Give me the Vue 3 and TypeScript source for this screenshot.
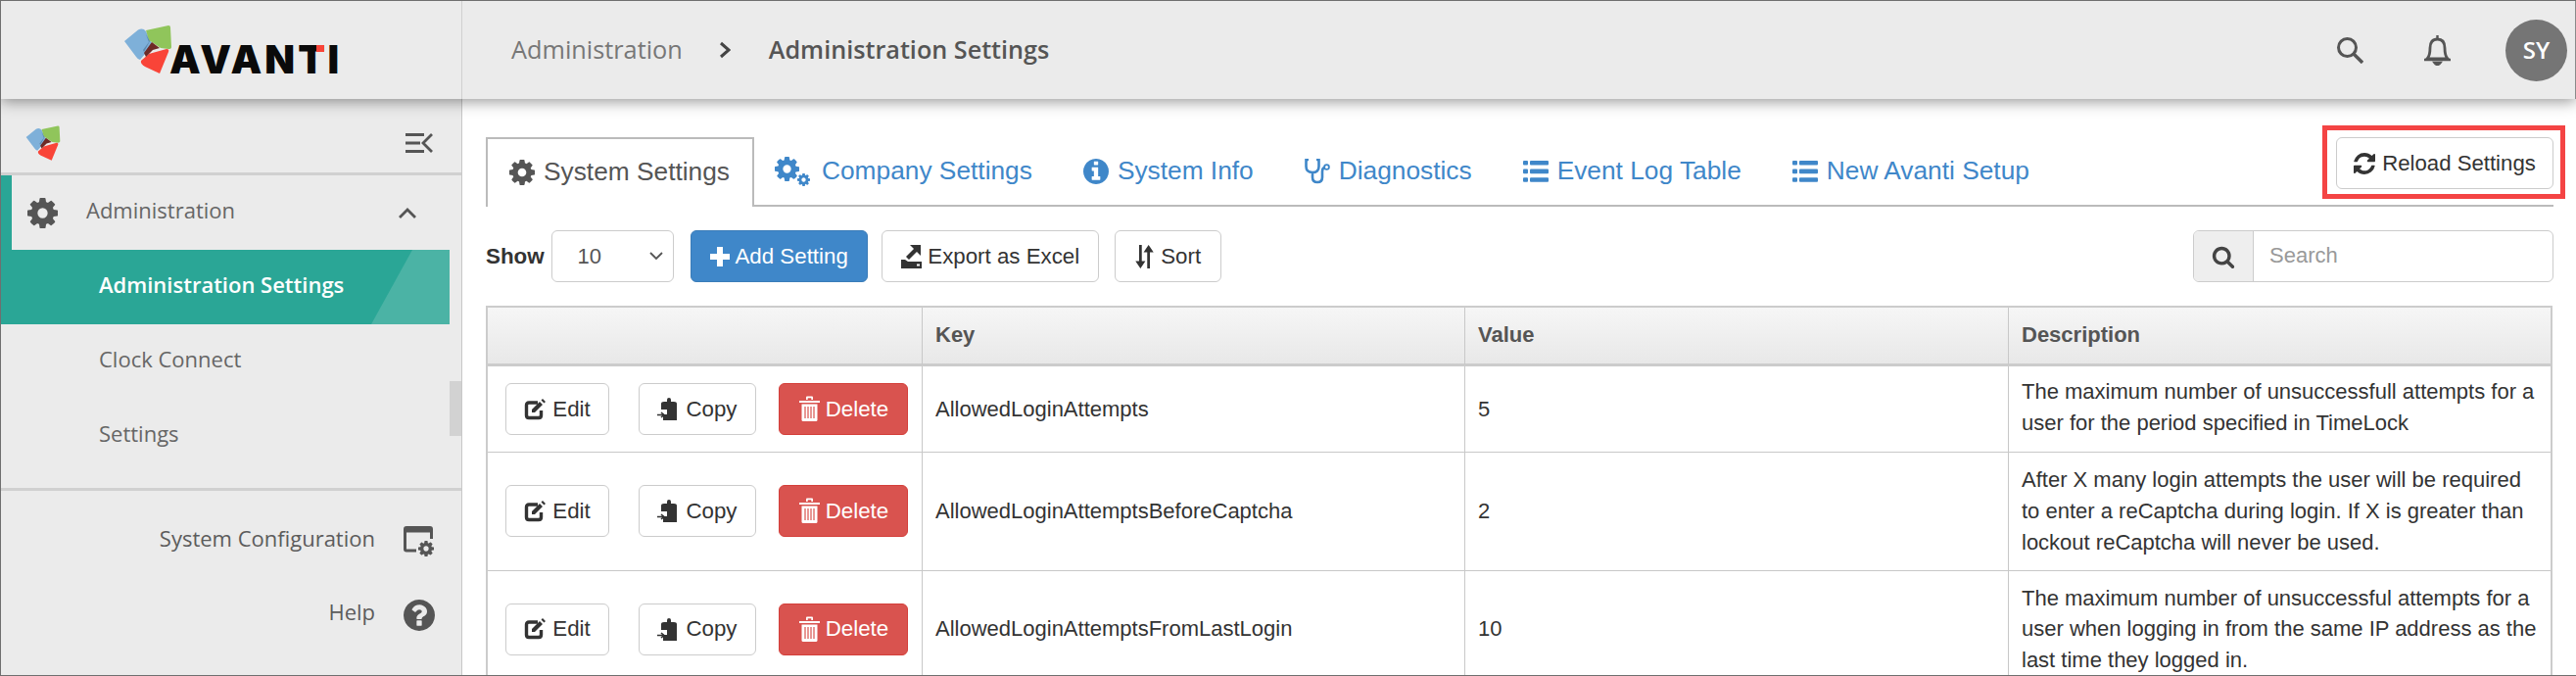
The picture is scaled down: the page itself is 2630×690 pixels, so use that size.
<script setup lang="ts">
const gear = 'M1152 896q0-106-75-181t-181-75-181 75-75 181 75 181 181 75 181-75 75-181zm512-109v222q0 12-8 23t-20 13l-185 28q-19 54-39 91 35 50 107 138 10 12 10 25t-9 23q-27 37-99 108t-94 71q-12 0-26-9l-138-108q-44 23-91 38-16 136-29 186-7 28-36 28h-222q-14 0-24.5-8.5t-11.5-21.5l-28-184q-49-16-90-37l-141 107q-10 9-25 9-14 0-25-11-126-114-165-168-7-10-7-23 0-12 8-23 15-21 51-66.5t54-70.5q-27-50-41-99l-183-27q-13-2-21-12.5t-8-23.5v-222q0-12 8-23t19-13l186-28q14-46 39-92-40-57-107-138-10-12-10-24 0-10 9-23 26-36 98.5-107.5t94.5-71.5q13 0 26 10l138 107q44-23 91-38 16-136 29-186 7-28 36-28h222q14 0 24.5 8.5t11.5 21.5l28 184q49 16 90 37l142-107q9-9 24-9 13 0 25 10 129 119 165 170 7 8 7 22 0 12-8 23-15 21-51 66.5t-54 70.5q26 50 41 98l183 28q13 2 21 12.5t8 23.5z'
const info = 'M1152 1376v-160q0-14-9-23t-23-9h-96v-512q0-14-9-23t-23-9h-320q-14 0-23 9t-9 23v160q0 14 9 23t23 9h96v320h-96q-14 0-23 9t-9 23v160q0 14 9 23t23 9h448q14 0 23-9t9-23zm-128-896v-160q0-14-9-23t-23-9h-192q-14 0-23 9t-9 23v160q0 14 9 23t23 9h192q14 0 23-9t9-23zm640 416q0 209-103 385.5t-279.5 279.5-385.5 103-385.5-103-279.5-279.5-103-385.5 103-385.5 279.5-279.5 385.5-103 385.5 103 279.5 279.5 103 385.5z'
const help = 'M1024 1376v-192q0-14-9-23t-23-9h-192q-14 0-23 9t-9 23v192q0 14 9 23t23 9h192q14 0 23-9t9-23zm256-672q0-88-55.5-163t-138.5-116-170-41q-243 0-371 213-15 24 8 42l132 100q7 6 19 6 16 0 25-12 53-68 86-92 34-24 86-24 48 0 85.5 26t37.5 59q0 38-20 61t-68 45q-63 28-115.5 86.5t-52.5 125.5v36q0 14 9 23t23 9h192q14 0 23-9t9-23q0-19 21.5-49.5t54.5-49.5q32-18 49-28.5t46-35 44.5-48 28-60.5 12.5-81zm384 192q0 209-103 385.5t-279.5 279.5-385.5 103-385.5-103-279.5-279.5-103-385.5 103-385.5 279.5-279.5 385.5-103 385.5 103 279.5 279.5 103 385.5z'
const refresh = 'M1639 1056q0 5-1 7-64 268-268 434.5t-478 166.5q-146 0-282.5-55t-243.5-157l-129 129q-19 19-45 19t-45-19-19-45v-448q0-26 19-45t45-19h448q26 0 45 19t19 45-19 45l-137 137q71 66 161 102t187 36q134 0 250-65t186-179q11-17 53-117 8-23 30-23h192q13 0 22.5 9.5t9.5 22.5zm25-800v448q0 26-19 45t-45 19h-448q-26 0-45-19t-19-45 19-45l138-138q-148-137-349-137-134 0-250 65t-186 179q-11 17-53 117-8 23-30 23h-199q-13 0-22.5-9.5t-9.5-22.5v-7q65-268 270-434.5t480-166.5q146 0 284 55.5t245 156.5l130-129q19-19 45-19t45 19 19 45z'
const search = 'M1216 832q0-185-131.5-316.5t-316.5-131.5-316.5 131.5-131.5 316.5 131.5 316.5 316.5 131.5 316.5-131.5 131.5-316.5zm512 832q0 52-38 90t-90 38q-54 0-90-38l-343-342q-179 124-399 124-143 0-273.5-55.5t-225-150-150-225-55.5-273.5 55.5-273.5 150-225 225-150 273.5-55.5 273.5 55.5 225 150 150 225 55.5 273.5q0 220-124 399l343 343q37 37 37 90z'

const rows = [
  { key: 'AllowedLoginAttempts', value: '5', desc: 'The maximum number of unsuccessfull attempts for a user for the period specified in TimeLock' },
  { key: 'AllowedLoginAttemptsBeforeCaptcha', value: '2', desc: 'After X many login attempts the user will be required to enter a reCaptcha during login. If X is greater than lockout reCaptcha will never be used.' },
  { key: 'AllowedLoginAttemptsFromLastLogin', value: '10', desc: 'The maximum number of unsuccessful attempts for a user when logging in from the same IP address as the last time they logged in.' },
]
</script>

<template>
  <div class="page">
    <svg class="defs" aria-hidden="true">
      <symbol id="mark" viewBox="125 24 52 54">
        <path d="M127 42 141 30.500Q146 28 149 32L156 46 143 61Q141 61 139 58Z" fill="#7eb0d9" />
        <path d="M149 31 172 26Q174 26 174 28L175 48Q175 50 172 50L164 49 152 41Z" fill="#90c55b" />
        <path d="M144 62 152 55 170 50Q173 50 172 53L163 75 148 68Q143 65 144 62Z" fill="#f94438" />
        <path d="M149 35 153 42 147 53 146 51 152 43Z" fill="#5d88ad" />
        <path d="M155 43 163 49 156 51 149 58 147 54Z" fill="#6e2a26" />
      </symbol>
      <symbol id="list" viewBox="0 0 26 22">
        <rect x="0" y="0" width="5" height="4.6" rx="1" /><rect x="7" y="0" width="19" height="4.6" rx="1" />
        <rect x="0" y="8.6" width="5" height="4.6" rx="1" /><rect x="7" y="8.6" width="19" height="4.6" rx="1" />
        <rect x="0" y="17.2" width="5" height="4.6" rx="1" /><rect x="7" y="17.2" width="19" height="4.6" rx="1" />
      </symbol>
      <symbol id="edit" viewBox="0 0 22 22">
        <path d="M14 4H5Q2.500 4 2.500 6.500V17Q2.500 19.500 5 19.500H15Q17.500 19.500 17.500 17V12" fill="none" stroke="currentColor" stroke-width="3.400" />
        <path d="M8 11 16 3 19 6 11 14H8Z M17.500 1.500 19 0 22 3 20.500 4.500Z" fill="currentColor" />
      </symbol>
      <symbol id="copy" viewBox="0 0 21 23">
        <path d="M7 4H10V2Q10 0 12 0T14 2V4H17Q20 4 20 6V23H6V17H10V12H4V6Q4 4 7 4Z" fill="currentColor" />
        <path d="M0 17.500H6M4 15 7 17.500 4 20" fill="none" stroke="currentColor" stroke-width="1.600" />
      </symbol>
      <symbol id="trash" viewBox="0 0 21 27">
        <path d="M0 5H21V7H0ZM7 4V1.500Q7 .5 8 .5H13Q14 .5 14 1.500V4H12.300V2.200H8.700V4Z" fill="currentColor" />
        <path d="M2.500 8.500V24.500Q2.500 26 4 26H17Q18.500 26 18.500 24.500V8.500Z" fill="currentColor" />
        <path d="M6 11V23M9 11V23M12 11V23M15 11V23" stroke="#d9534f" stroke-width="1.200" />
      </symbol>
    </svg>

    <header class="topbar">
      <div class="brand">
        <svg class="brand-mark"><use href="#mark" /></svg>
        <span class="wordmark">AVANTI<i class="wordmark-dot"></i></span>
      </div>
      <div class="crumbs">
        <span class="crumb">Administration</span>
        <svg class="crumb-sep" viewBox="0 0 12 18"><path d="M2 2 10 9 2 16" fill="none" stroke="#444" stroke-width="3" /></svg>
        <span class="crumb-current">Administration Settings</span>
      </div>
      <div class="top-actions">
        <svg class="top-search" viewBox="0 0 27 27"><circle cx="10.500" cy="10.500" r="9" fill="none" stroke="#555" stroke-width="3" /><path d="M17 17 26 26" stroke="#555" stroke-width="3.400" /></svg>
        <svg class="top-bell" viewBox="0 0 27 31">
          <path d="M3 24Q6 21 6 13 6 4 13.500 4T21 13Q21 21 24 24Z" fill="none" stroke="#555" stroke-width="2.800" />
          <path d="M13.500 0V4M0 25H27M10.500 28Q13.500 32 16.500 28Z" stroke="#555" stroke-width="2.400" fill="#555" />
        </svg>
        <div class="avatar">SY</div>
      </div>
    </header>

    <div class="body">
      <aside class="side">
        <div class="side-head">
          <svg class="side-mark"><use href="#mark" /></svg>
          <svg class="side-toggle" viewBox="0 0 28 20"><path d="M0 1.500H19M0 10H15M0 18.500H19M27 1 18 10 27 19" fill="none" stroke="#555" stroke-width="2.800" /></svg>
        </div>
        <nav class="menu">
          <div class="menu-parent">
            <svg class="menu-gear" viewBox="128 128 1536 1536"><path :d="gear" /></svg>
            <span class="lift">Administration</span>
            <svg class="menu-chevron" viewBox="0 0 18 11"><path d="M1 10 9 2 17 10" fill="none" stroke="#555" stroke-width="2.800" /></svg>
          </div>
          <a class="menu-active"><span class="lift">Administration Settings</span><i class="menu-active-tail"></i></a>
          <a class="menu-item"><span class="lift">Clock Connect</span></a>
          <a class="menu-item"><span class="lift">Settings</span></a>
          <i class="menu-scroll"></i>
        </nav>
        <div class="side-foot">
          <div class="foot-row">
            <span class="lift">System Configuration</span>
            <svg class="foot-icon" viewBox="0 0 32 32">
              <path d="M13 25H3Q1.500 25 1.500 23.500V3Q1.500 1.500 3 1.500H27Q28.500 1.500 28.500 3V13" fill="none" stroke="#555" stroke-width="3" />
              <path d="M1.500 2H28.500V6.500H1.500Z" fill="#555" />
              <svg x="15" y="15" width="16" height="16" viewBox="128 128 1536 1536"><path :d="gear" fill="#555" /></svg>
            </svg>
          </div>
          <div class="foot-row">
            <span class="lift">Help</span>
            <svg class="foot-icon" viewBox="128 128 1536 1536"><path :d="help" fill="#555" /></svg>
          </div>
        </div>
      </aside>

      <main class="main">
        <div class="tabs">
          <a class="tab tab-active"><svg class="tab-ic" viewBox="128 128 1536 1536"><path :d="gear" /></svg>System Settings</a>
          <a class="tab">
            <svg class="tab-ic tab-ic-wide" viewBox="0 0 36 30">
              <svg x="0" y="0" width="25" height="25" viewBox="128 128 1536 1536"><path :d="gear" /></svg>
              <svg x="23" y="17" width="13" height="13" viewBox="128 128 1536 1536"><path :d="gear" /></svg>
            </svg>Company Settings
          </a>
          <a class="tab"><svg class="tab-ic" viewBox="128 128 1536 1536"><path :d="info" /></svg>System Info</a>
          <a class="tab">
            <svg class="tab-ic" viewBox="0 0 26 26">
              <path d="M4 1H1.500V8Q1.500 14 8 14T14.500 8V1H12M8 14V19Q8 24 13 24T18 19V13Q18 9 21 9" fill="none" stroke="currentColor" stroke-width="2.600" />
              <circle cx="22.500" cy="8.500" r="2.400" fill="none" stroke="currentColor" stroke-width="1.800" />
            </svg>Diagnostics
          </a>
          <a class="tab"><svg class="tab-ic"><use href="#list" /></svg>Event Log Table</a>
          <a class="tab"><svg class="tab-ic"><use href="#list" /></svg>New Avanti Setup</a>
          <div class="reload-wrap">
            <button class="btn reload"><svg class="btn-ic btn-ic-reload" viewBox="128 128 1536 1536"><path :d="refresh" /></svg>Reload Settings</button>
          </div>
        </div>

        <div class="toolbar">
          <b class="show">Show</b>
          <div class="select">10<svg class="select-arrow" viewBox="0 0 14 9"><path d="M1 1 7 7 13 1" fill="none" stroke="#555" stroke-width="1.800" /></svg></div>
          <button class="btn btn-primary">
            <svg class="btn-ic" viewBox="0 0 20 20"><path d="M7 0H13V7H20V13H13V20H7V13H0V7H7Z" fill="currentColor" /></svg>Add Setting
          </button>
          <button class="btn">
            <svg class="btn-ic btn-ic-lg" viewBox="0 0 21 24">
              <path d="M20 0V11L16 7 8 15 5 12 13 4 9 0Z" fill="currentColor" />
              <path d="M0 15H4L7 17H21V24H0Z" fill="currentColor" />
              <rect x="16" y="19.500" width="3" height="2" fill="#fff" />
            </svg>Export as Excel
          </button>
          <button class="btn btn-sort">
            <svg class="btn-ic btn-ic-lg" viewBox="0 0 20 26">
              <path d="M4 0H7V18H11L5.500 26 0 18H4Z" fill="currentColor" />
              <path d="M13 26H16V8H20L14.500 0 9 8H13Z" fill="currentColor" />
            </svg>Sort
          </button>
          <div class="search">
            <span class="search-addon"><svg viewBox="0 0 1792 1792"><path :d="search" /></svg></span>
            <span class="search-input">Search</span>
          </div>
        </div>

        <table class="grid">
          <colgroup><col class="c1" /><col class="c2" /><col class="c3" /><col class="c4" /></colgroup>
          <thead>
            <tr><th></th><th>Key</th><th>Value</th><th>Description</th></tr>
          </thead>
          <tbody>
            <tr v-for="row in rows" :key="row.key">
              <td>
                <div class="actions">
                  <button class="btn btn-row btn-edit"><svg class="btn-ic"><use href="#edit" /></svg>Edit</button>
                  <button class="btn btn-row btn-copy"><svg class="btn-ic"><use href="#copy" /></svg>Copy</button>
                  <button class="btn btn-row btn-danger"><svg class="btn-ic btn-ic-trash"><use href="#trash" /></svg>Delete</button>
                </div>
              </td>
              <td>{{ row.key }}</td>
              <td>{{ row.value }}</td>
              <td>{{ row.desc }}</td>
            </tr>
          </tbody>
        </table>
      </main>
    </div>
  </div>
</template>

<style>
html, body { margin: 0; background: #fff; }
</style>

<style scoped>
.page {
  width: 2630px; height: 690px; box-sizing: border-box; overflow: hidden;
  border: 1px solid #6f6f6f; border-right: 0; background: #fff;
  display: flex; flex-direction: column;
  font-family: "Liberation Sans", Arial, sans-serif; font-size: 22px; line-height: 31.700px; color: #333;
}
.defs { position: absolute; width: 0; height: 0; }

.topbar {
  flex: none; height: 100px; display: flex; background: #ebebeb; position: relative; z-index: 2;
  box-shadow: 0 3px 14px rgba(0,0,0,.4); border-right: 1px solid #8a8a8a;
  font-family: "Open Sans", sans-serif;
}
.brand { width: 470px; flex: none; border-right: 1px solid #d0d0d0; position: relative; }
.brand-mark { position: absolute; left: 124px; top: 23px; width: 52px; height: 54px; }
.wordmark { position: absolute; left: 172px; top: 32px; font-family: Inter, sans-serif; font-weight: 900; font-size: 40px; line-height: 56px; color: #0a0a0a; letter-spacing: 3px; }
.wordmark-dot { position: absolute; left: 150px; top: 13px; width: 8px; height: 7px; background: #f94438; }
.crumbs { padding-left: 50px; display: flex; align-items: center; flex: 1; font-size: 25.300px; }
.crumb { color: #777; }
.crumb-sep { width: 12px; height: 18px; margin: 0 39px 0 37px; }
.crumb-current { color: #555; font-weight: 600; font-size: 25.200px; }
.top-actions { display: flex; align-items: center; padding-right: 8px; }
.top-search { width: 27px; height: 27px; }
.top-bell { width: 27px; height: 31px; margin-left: 62px; }
.avatar { width: 63px; height: 63px; border-radius: 50%; background: #757575; color: #fff; margin-left: 56px; display: flex; align-items: center; justify-content: center; font-weight: 600; font-size: 24px; }

.body { flex: 1; display: flex; min-height: 0; }
.side { width: 470px; flex: none; background: #ebebeb; border-right: 1px solid #c8c8c8; font-family: "Open Sans", sans-serif; font-size: 22px; color: #666; display: flex; flex-direction: column; }
.side-head { height: 75px; flex: none; box-sizing: border-box; padding: 15px 29px 0 24px; display: flex; align-items: center; justify-content: space-between; box-shadow: 0 3px 0 #d0d0d0; margin-bottom: 3px; }
.side-mark { width: 38px; height: 39px; }
.side-toggle { width: 28px; height: 20px; }
.lift { position: relative; top: -2.500px; }
.menu { position: relative; height: 319px; flex: none; box-sizing: border-box; padding-right: 12px; }
.menu-parent { height: 76px; box-sizing: border-box; border-left: 11px solid #2aa696; display: flex; align-items: center; padding: 0 34px 0 16px; }
.menu-gear { width: 31px; height: 31px; fill: #555; margin-right: 29px; }
.menu-chevron { width: 18px; height: 11px; margin-left: auto; }
.menu-active { display: flex; align-items: center; height: 76px; padding-left: 100px; background: #2aa696; color: #fff; font-weight: 600; position: relative; overflow: hidden; }
.menu-active-tail { position: absolute; top: 0; bottom: 0; right: 0; width: 80px; background: #4bb3a5; clip-path: polygon(42px 0, 100% 0, 100% 100%, 0 100%); }
.menu-item { display: flex; align-items: center; height: 76px; padding-left: 100px; }
.menu-scroll { position: absolute; right: 0; top: 210px; width: 12px; height: 56px; background: #d2d2d2; }
.side-foot { border-top: 3px solid #d0d0d0; padding-top: 14px; }
.foot-row { height: 75px; display: flex; align-items: center; justify-content: flex-end; gap: 29px; padding-right: 27px; color: #5c5c5c; }
.foot-icon { width: 32px; height: 32px; }

.main { flex: 1; min-width: 0; padding: 39px 23px 0 24px; background: #fff; }
.tabs { display: flex; height: 71px; box-sizing: border-box; border-bottom: 2px solid #bbb; align-items: flex-start; font-size: 26.300px; }
.tab { display: flex; align-items: center; height: 69px; padding: 0 26px; color: #3f87c9; white-space: nowrap; }
.tab-active { border: 2px solid #bbb; border-bottom: 0; height: 71px; padding: 0 23px 2px 22px; color: #555; background: #fff; margin-right: -5px; box-sizing: border-box; }
.tab-ic { width: 26px; height: 26px; fill: currentColor; margin-right: 9px; flex: none; }
.tab-ic-wide { width: 36px; height: 30px; margin-right: 12px; }
.reload-wrap { margin-left: auto; position: relative; }
.reload-wrap::after { content: ""; position: absolute; inset: -12px -12px -10px -14px; border: 5px solid #f44444; pointer-events: none; }

.btn {
  height: 53px; box-sizing: border-box; display: inline-flex; align-items: center; justify-content: center;
  padding: 0 19px; background: #fff; border: 1.500px solid #ccc; border-radius: 6px;
  font: inherit; font-size: 22.300px; color: #333; white-space: nowrap;
}
.btn-ic { width: 20px; height: 20px; fill: currentColor; margin-right: 6px; flex: none; }
.btn-ic-lg { width: 21px; height: 24px; }
.btn-ic-reload { width: 22px; height: 22px; margin-right: 7px; }
.reload { width: 222px; padding: 0; font-size: 22.200px; }
.btn-primary { background: #3f87c9; border-color: #3a7cb8; color: #fff; margin-left: 1.500px; margin-right: -1px; }
.btn-danger { background: #d9534f; border-color: #d43f3a; color: #fff; }
.btn-sort { padding: 0 19.500px; }

.toolbar { display: flex; align-items: center; margin-top: 24px; gap: 15.500px; }
.show { color: #333; margin-right: -8px; width: 59px; font-size: 22.400px; }
.select { width: 125px; height: 53px; box-sizing: border-box; border: 1.500px solid #ccc; border-radius: 6px; display: flex; align-items: center; padding-left: 26px; color: #555; position: relative; }
.select-arrow { width: 14px; height: 9px; margin-left: auto; margin-right: 10px; }
.search { margin-left: auto; width: 368px; height: 53px; box-sizing: border-box; display: flex; border: 1.500px solid #ccc; border-radius: 6px; overflow: hidden; }
.search-addon { width: 60px; background: #eee; border-right: 1.500px solid #ccc; display: flex; align-items: center; justify-content: center; }
.search-addon svg { width: 24px; height: 24px; fill: #444; }
.search-input { padding-left: 16px; line-height: 50px; color: #999; }

.grid { width: 2110px; margin-top: 24px; table-layout: fixed; border-collapse: separate; border-spacing: 0; border: solid #ccc; border-width: 2px 2px 0; }
.c1 { width: 443px; } .c2 { width: 554px; } .c3 { width: 555px; } .c4 { width: 554px; }
.grid th { height: 60px; padding: 0 13px 2px; box-sizing: border-box; text-align: left; color: #555; font-weight: 700; background: linear-gradient(#f6f6f6, #e8e8e8); border-bottom: 3px solid #ccc; border-left: 1px solid #c8c8c8; }
.grid td { padding: 12px 13px; border-bottom: 1px solid #c8c8c8; border-left: 1px solid #c8c8c8; vertical-align: middle; }
.grid td:last-child { padding: 10px 13px 14px; }
.grid tr:nth-child(n+2) td:last-child { padding: 12px 13px; }
.grid th:first-child, .grid td:first-child { border-left: 0; }
.grid td:first-child { padding: 0 0 0 18px; }
.actions { display: flex; }
.btn-row { padding: 0 18px; }
.btn-edit { width: 106px; padding: 0; }
.btn-edit .btn-ic { width: 22px; height: 22px; margin-right: 7px; }
.btn-copy { width: 120px; padding: 0; margin: 0 23px 0 30px; }
.btn-copy .btn-ic { width: 21px; height: 23px; margin-right: 8px; }
.btn-danger { width: 132px; padding: 0; }
.btn-ic-trash { width: 21px; height: 27px; margin-left: 1px; }
</style>
